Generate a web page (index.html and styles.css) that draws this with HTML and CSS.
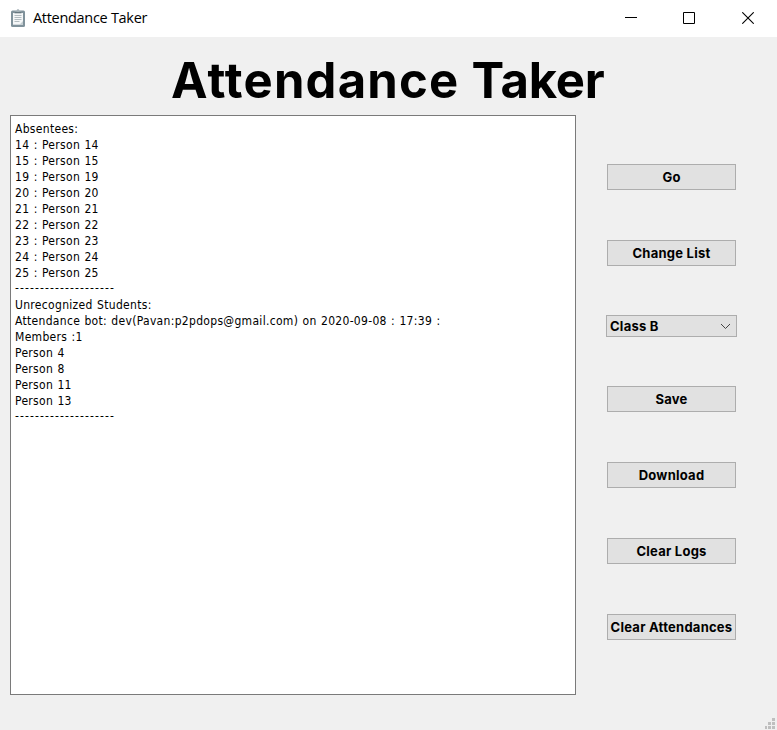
FILE: index.html
```html
<!DOCTYPE html>
<html lang="en">
<head>
<meta charset="utf-8">
<title>Attendance Taker</title>
<link rel="stylesheet" href="styles.css">
</head>
<body>
<header class="titlebar">
  <svg class="app-icon" width="14" height="18" viewBox="0 0 14 18">
    <rect x="0" y="1.5" width="14" height="16.5" rx="1.5" fill="#80929b"/>
    <rect x="2" y="4" width="10" height="11.7" fill="#f5f7f8"/>
    <path d="M3.5 6.5h7M3.5 8.5h7M3.5 10.5h7M3.5 12.5h5" stroke="#b3bcc0" fill="none"/>
    <path d="M8.5 15.7 12 12v3.7z" fill="#c3cdd1"/>
    <path d="M3.5 4V2.5h2Q5.500 0 7 0t1.500 2.500h2V4z" fill="#a4b1b7"/>
    <rect x="3.500" y="3" width="7" height="1.300" fill="#66777f"/>
  </svg>
  <span class="caption">Attendance Taker</span>
  <div class="controls">
    <svg width="12" height="12" viewBox="0 0 12 12"><path d="M0 5.500h12" stroke="#000"/></svg>
    <svg width="12" height="12" viewBox="0 0 12 12"><path d="M.5.5h11v11H.5z" fill="none" stroke="#000"/></svg>
    <svg width="12" height="12" viewBox="0 0 12 12"><path d="M.3.3l11.400 11.400M11.700.3L.3 11.700" stroke="#000" stroke-width="1.100"/></svg>
  </div>
</header>
<h1 class="heading"><span class="word-first">Attendance</span><span class="word-last">Taker</span></h1>
<main class="content">
  <div class="log">
    <p>Absentees:</p>
    <p>14 : Person 14</p>
    <p>15 : Person 15</p>
    <p>19 : Person 19</p>
    <p>20 : Person 20</p>
    <p>21 : Person 21</p>
    <p>22 : Person 22</p>
    <p>23 : Person 23</p>
    <p>24 : Person 24</p>
    <p>25 : Person 25</p>
    <p class="rule">--------------------</p>
    <p>Unrecognized Students:</p>
    <p>Attendance bot: dev(Pavan:p2pdops@gmail.com) on 2020-09-08 : 17:39 :</p>
    <p>Members :1</p>
    <p>Person 4</p>
    <p>Person 8</p>
    <p>Person 11</p>
    <p>Person 13</p>
    <p class="rule">--------------------</p>
  </div>
  <div class="actions">
    <button class="btn">Go</button>
    <button class="btn">Change List</button>
    <button class="btn combo"><span>Class B</span>
      <svg width="11" height="7" viewBox="0 0 11 7"><path d="M1 1l4.500 4.500L10 1" fill="none" stroke="#444"/></svg>
    </button>
    <button class="btn">Save</button>
    <button class="btn">Download</button>
    <button class="btn">Clear Logs</button>
    <button class="btn">Clear Attendances</button>
  </div>
</main>
<footer class="status">
  <svg width="10" height="11" viewBox="0 0 10 11" fill="#bfbfbf"><path d="M7 0h3v3H7zM3 4h3v3H3zM7 4h3v3H7zM0 8h2v3H0zM3 8h3v3H3zM7 8h3v3H7z"/></svg>
</footer>
</body>
</html>
```

FILE: styles.css
```css
* { box-sizing: border-box; }
body {
  margin: 0;
  width: 777px;
  height: 730px;
  display: flex;
  flex-direction: column;
  overflow: hidden;
  background: #f0f0f0;
  color: #000;
}
.titlebar {
  height: 37px;
  flex: none;
  display: flex;
  align-items: center;
  padding: 0 23px 1px 11px;
  background: #fff;
}
.app-icon { margin-right: 8px; }
.caption {
  font: 14.500px/20px "Open Sans", sans-serif;
  letter-spacing: -0.3px;
  white-space: nowrap;
}
.controls { display: flex; gap: 47px; margin-left: auto; }
.controls svg { display: block; }
.controls svg:first-child { margin-right: -1px; }
.heading {
  height: 78px;
  flex: none;
  margin: 0;
  padding: 5px 0 0 171px;
  display: flex;
  gap: 12px;
  font: 700 49px/78px Inter, sans-serif;
  white-space: nowrap;
}
.word-first { letter-spacing: 1.2px; }
.word-last { letter-spacing: -0.2px; }
.content { display: flex; height: 580px; padding-left: 10px; }
.log {
  width: 566px;
  border: 1px solid #7a7a7a;
  background: #fff;
  padding: 5px 4px;
  font: 12px/16px "DejaVu Sans Condensed", "DejaVu Sans", sans-serif;
  font-stretch: condensed;
  letter-spacing: 0.31px;
  word-spacing: 0.6px;
}
.log p { margin: 0; white-space: pre; }
.log .rule { letter-spacing: 1.1px; line-height: 15px; padding-bottom: 1px; }
.actions {
  width: 131px;
  margin-left: 30px;
  padding-top: 49px;
  display: flex;
  flex-direction: column;
  align-items: center;
  gap: 50px;
}
.btn {
  width: 129px;
  height: 26px;
  flex: none;
  padding: 0;
  border: 1px solid #adadad;
  background: #e1e1e1;
  color: #000;
  font: 700 13px/24px Inter, sans-serif;
  letter-spacing: 0.25px;
  white-space: nowrap;
}
.combo {
  width: 131px;
  height: 22px;
  margin: -1px 0;
  display: flex;
  align-items: center;
  justify-content: space-between;
  padding: 0 5px 0 3px;
  line-height: 20px;
}
.status {
  flex: 1;
  display: flex;
  justify-content: flex-end;
  align-items: flex-end;
  padding: 0 2px 1px 0;
}
```
